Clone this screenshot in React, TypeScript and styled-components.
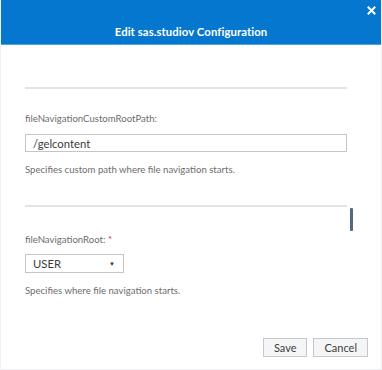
import React from "react";
import styled, { createGlobalStyle } from "styled-components";

const Global = createGlobalStyle`
  html, body { margin: 0; padding: 0; background: #fff; }
  body { font-family: Lato, "Open Sans", sans-serif; }
`;

const Dialog = styled.div`
  width: 382px;
  height: 370px;
  display: flex;
  flex-direction: column;
  background: #fff;
  box-sizing: border-box;
  border-left: 1px solid #eef0f3;
  border-right: 1px solid #eef0f3;
  border-bottom: 1px solid #eef0f3;
`;

const Header = styled.div`
  position: relative;
  height: 38px;
  background: #0677cf;
  border-bottom: 1px solid #4aa3e6;
  display: flex;
  align-items: flex-end;
  justify-content: center;
  padding-bottom: 6px;
`;

const Title = styled.div`
  color: #fff;
  font-weight: 700;
  font-size: 11.3px;
  letter-spacing: 0.1px;
`;

const Close = styled.button`
  position: absolute;
  top: 4px;
  right: 4px;
  width: 12px;
  height: 12px;
  padding: 0;
  border: 0;
  background: transparent;
  display: flex;
  align-items: center;
  justify-content: center;
`;

const Body = styled.div`
  position: relative;
  flex: 1;
  padding: 42px 34px 0 24px;
`;

const Section = styled.div`
  & + & {
    margin-top: 30px;
  }
`;

const Divider = styled.div`
  height: 2px;
  background: #e3e4e9;
`;

const Label = styled.div<{ $top: number }>`
  margin-top: ${({ $top }) => $top}px;
  font-size: 9.6px;
  color: #6d6d6d;
  line-height: 11px;
`;

const Req = styled.span`
  color: #d0302a;
`;

const TextInput = styled.div`
  margin-top: 10px;
  height: 18px;
  box-sizing: border-box;
  border: 1px solid #c4c5c9;
  padding: 0 7px;
  display: flex;
  align-items: center;
  font-size: 11.3px;
  color: #3c3c3c;
`;

const Select = styled(TextInput)<{ $w: number }>`
  width: ${({ $w }) => $w}px;
  height: 19px;
  margin-top: 9px;
  justify-content: space-between;
  padding: 0 8px 0 7px;
`;

const Arrow = styled.span`
  font-size: 6px;
  color: #333;
`;

const Help = styled.div`
  margin-top: 12px;
  font-size: 9.6px;
  color: #6d6d6d;
  line-height: 11px;
`;

const Thumb = styled.div`
  position: absolute;
  right: 28px;
  top: 163px;
  width: 3px;
  height: 23px;
  border-radius: 1px;
  background: #566780;
`;

const Footer = styled.div`
  display: flex;
  justify-content: flex-end;
  gap: 6px;
  padding: 0 13px 12px 0;
`;

const Button = styled.button`
  height: 19px;
  padding: 0 10px;
  border: 1px solid #c6c7cb;
  background: #f4f5f7;
  color: #3c3c3c;
  font-family: Lato, "Open Sans", sans-serif;
  font-size: 11px;
`;

export default function App() {
  return (
    <>
      <Global />
      <Dialog>
        <Header>
          <Title>Edit sas.studiov Configuration</Title>
          <Close aria-label="Close">
            <svg width="9" height="9" viewBox="0 0 9 9">
              <path d="M1.5 1.5 L7.5 7.5 M7.5 1.5 L1.5 7.5" stroke="#fff" strokeWidth="2" strokeLinecap="square" />
            </svg>
          </Close>
        </Header>
        <Body>
          <Section>
            <Divider />
            <Label $top={24}>fileNavigationCustomRootPath:</Label>
            <TextInput>/gelcontent</TextInput>
            <Help>Specifies custom path where file navigation starts.</Help>
          </Section>
          <Section>
            <Divider />
            <Label $top={27}>
              fileNavigationRoot: <Req>*</Req>
            </Label>
            <Select $w={99}>
              <span>USER</span>
              <Arrow>▼</Arrow>
            </Select>
            <Help>Specifies where file navigation starts.</Help>
          </Section>
          <Thumb />
        </Body>
        <Footer>
          <Button>Save</Button>
          <Button>Cancel</Button>
        </Footer>
      </Dialog>
    </>
  );
}
